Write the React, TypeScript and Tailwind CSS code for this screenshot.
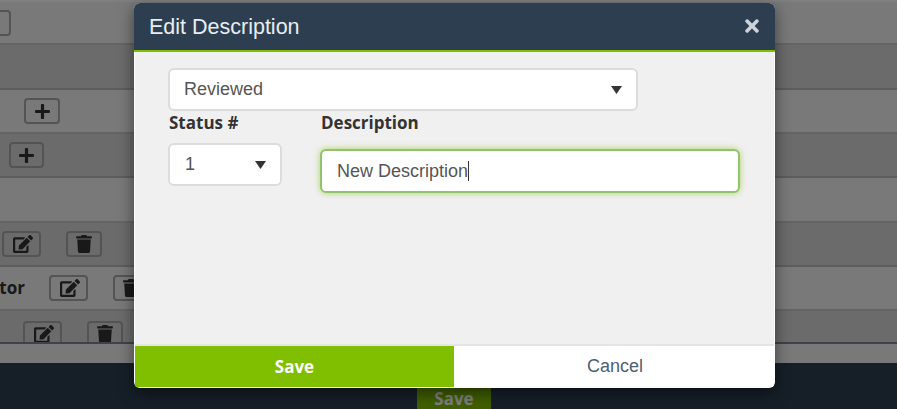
import { FaEdit, FaPlus, FaTrash, FaTimes } from "react-icons/fa";

function IconButton({ kind, width }: { kind: "plus" | "edit" | "trash"; width: string }) {
  return (
    <button className={`flex h-[26px] ${width} shrink-0 items-center justify-center rounded-[4px] border-2 border-[#a8a8a8] text-[#333]`}>
      {kind === "plus" && <FaPlus className="text-[17px]" />}
      {kind === "edit" && <FaEdit className="ml-[2px] text-[20px]" />}
      {kind === "trash" && <FaTrash className="text-[18px]" />}
    </button>
  );
}

function Caret() {
  return (
    <svg width="11" height="8" viewBox="0 0 11 8" className="fill-[#333]">
      <path d="M0 0h11L5.5 8z" />
    </svg>
  );
}

export default function App() {
  return (
    <div className="relative h-[409px] w-[897px] overflow-hidden bg-[#2c3e50] font-['Liberation_Sans',sans-serif]">
      {/* page behind the modal */}
      <div className="h-[344px] overflow-hidden border-b-2 border-[#7e8590] bg-white pt-[2px] text-[#333]">
        <div className="flex h-[43px] items-center border-b-2 border-[#c8c8c8] bg-[#f2f2f2]">
          <div className="-ml-[28px]">
            <IconButton kind="plus" width="w-[39px]" />
          </div>
        </div>
        <div className="h-[45px] border-b-2 border-[#bbb] bg-[#d6d6d6]" />
        <div className="flex h-[44px] items-center border-b-2 border-[#c8c8c8] bg-[#f2f2f2] pl-[24px]">
          <IconButton kind="plus" width="w-[36px]" />
        </div>
        <div className="flex h-[44px] items-center border-b-2 border-[#bbb] bg-[#d6d6d6] pl-[9px]">
          <IconButton kind="plus" width="w-[35px]" />
        </div>
        <div className="h-[45px] border-b-2 border-[#c8c8c8] bg-[#f2f2f2]" />
        <div className="flex h-[44px] items-center gap-[25px] border-b-2 border-[#bbb] bg-[#d6d6d6] pl-[2px]">
          <IconButton kind="edit" width="w-[39px]" />
          <IconButton kind="trash" width="w-[36px]" />
        </div>
        <div className="flex h-[44px] items-center border-b-2 border-[#c8c8c8] bg-[#f2f2f2]">
          <div className="flex w-[25px] justify-end overflow-hidden text-[17px] font-bold font-['Open_Sans',sans-serif]">
            <span className="shrink-0">Administrator</span>
          </div>
          <div className="ml-[24px] flex gap-[25px]">
            <IconButton kind="edit" width="w-[39px]" />
            <IconButton kind="trash" width="w-[36px]" />
          </div>
        </div>
        <div className="flex h-[44px] items-start gap-[25px] bg-[#d6d6d6] pl-[23px] pt-[10px]">
          <IconButton kind="edit" width="w-[39px]" />
          <IconButton kind="trash" width="w-[36px]" />
        </div>
      </div>
      <div className="h-[19px] bg-[#f2f2f2]" />
      <div className="flex h-[44px] justify-center pl-[11px] pt-[25px]">
        <button className="h-[21px] w-[74px] bg-[#80bf00] text-[17px] font-bold leading-[21px] text-white font-['Open_Sans',sans-serif]">
          Save
        </button>
      </div>

      {/* backdrop */}
      <div className="absolute inset-0 bg-black/50" />

      {/* modal */}
      <div className="absolute left-[134px] top-[3px] flex h-[385px] w-[641px] flex-col overflow-hidden rounded-[6px] bg-white shadow-[0_5px_15px_rgba(0,0,0,0.5)]">
        <div className="flex h-[49px] shrink-0 items-center justify-between border-b-2 border-[#80bf00] bg-[#2c3e50] pl-[15px] pr-[13px]">
          <h4 className="mt-[2px] text-[21.5px] text-[#e8edf2]">Edit Description</h4>
          <FaTimes className="-mt-[1px] text-[20px] text-[#cdd3d9]" />
        </div>
        <div className="mx-[1px] flex-1 bg-[#f0f0f0] pl-[33px] pt-[16px]">
          <div className="flex h-[43px] w-[470px] items-center justify-between rounded-[6px] border-2 border-[#dcdcdc] bg-white pl-[14px] pr-[14px] text-[18px] text-[#555]">
            <span>Reviewed</span>
            <Caret />
          </div>
          <div className="flex">
            <div className="w-[152px]">
              <label className="block h-[32px] pl-[1px] text-[17px] font-bold leading-[24px] text-[#333] font-['Open_Sans',sans-serif]">
                Status #
              </label>
              <div className="flex h-[43px] w-[114px] items-center justify-between rounded-[6px] border-2 border-[#dcdcdc] bg-white pl-[15px] pr-[14px] text-[18px] text-[#555]">
                <span>1</span>
                <Caret />
              </div>
            </div>
            <div>
              <label className="block h-[38px] pl-[1px] text-[17px] font-bold leading-[24px] text-[#333] font-['Open_Sans',sans-serif]">
                Description
              </label>
              <div className="flex h-[44px] w-[420px] items-center rounded-[6px] border-2 border-[#8fc46a] bg-white pl-[15px] text-[18px] text-[#555] shadow-[0_0_6px_rgba(128,191,0,0.6)]">
                <span>New Description</span>
                <span className="h-[20px] w-[1px] bg-[#333]" />
              </div>
            </div>
          </div>
        </div>
        <div className="mx-[1px] mb-[1px] flex h-[43px] shrink-0 border-t-2 border-[#e5e5e5]">
          <button className="w-[319px] bg-[#80bf00] text-[17px] font-bold text-white font-['Open_Sans',sans-serif]">Save</button>
          <button className="ml-[2px] flex-1 bg-white text-[18px] text-[#4f5f70]">Cancel</button>
        </div>
      </div>
    </div>
  );
}
